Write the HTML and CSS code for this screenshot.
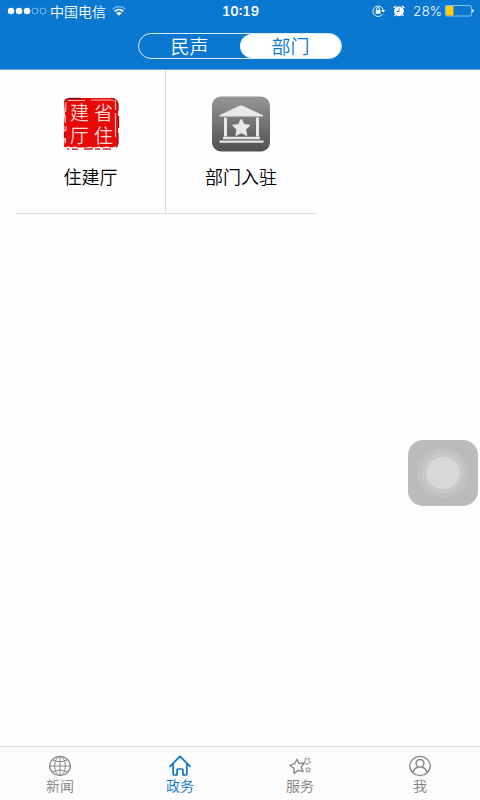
FILE: index.html
```html
<!DOCTYPE html>
<html lang="zh-CN">
<head>
<meta charset="utf-8">
<meta name="viewport" content="width=device-width, initial-scale=1">
<title>政务</title>
<link rel="stylesheet" href="styles.css">
</head>
<body>
<header class="header">
  <div class="status">
    <div class="status-side">
      <svg class="signal" width="40" height="8" viewBox="0 0 40 8" fill="#fff" aria-hidden="true">
        <circle cx="4" cy="4" r="3.2"/><circle cx="12" cy="4" r="3.2"/><circle cx="20" cy="4" r="3.2"/>
        <g fill="none" stroke="#b4d6f2" stroke-width=".7"><circle cx="28" cy="4" r="3"/><circle cx="36" cy="4" r="3"/></g>
      </svg>
      <span class="carrier">中国电信</span>
      <svg class="wifi" width="14" height="10" viewBox="0 0 14 10" fill="none" aria-hidden="true">
        <path d="M.7 3.2Q7-2 13.300 3.200" stroke="#78b5e6" stroke-width="1.300"/>
        <path d="M2.700 5.400Q7 1.700 11.300 5.400" stroke="#fff" stroke-width="1.500"/>
        <path d="M4.200 7Q7 4.800 9.800 7L7 9.800Z" fill="#fff"/>
      </svg>
    </div>
    <time class="clock">10:19</time>
    <div class="status-side status-right">
      <svg width="14" height="12" viewBox="0 0 14 12" fill="none" stroke="#fff" aria-hidden="true">
        <path d="M10.600 9A5.200 5.200 0 1 1 11.200 5" stroke-width=".9"/>
        <path d="M9.300 5h4l-2 2.500Z" fill="#fff" stroke="none"/>
        <path d="M4.600 5.300V4a1.500 1.500 0 0 1 3 0v1.300" stroke-width=".9"/>
        <rect x="3.700" y="5" width="4.800" height="3.700" fill="#fff" stroke="none"/>
      </svg>
      <svg class="alarm" width="12" height="12" viewBox="0 0 12 12" fill="none" aria-hidden="true">
        <circle cx="6" cy="6.300" r="4.900" fill="#fff"/>
        <path d="M.7 2.800 2.900 1M11.300 2.800 9.100 1M2.500 10 1.600 11M9.500 10l.9 1" stroke="#fff" stroke-width="1.300"/>
        <path d="M6 3.300v3.200H3.700" stroke="#0a78d0" stroke-width=".9"/>
      </svg>
      <span class="percent">28%</span>
      <svg width="29" height="12" viewBox="0 0 29 12" aria-hidden="true">
        <rect x=".5" y=".5" width="26" height="10.500" rx="1.500" fill="none" stroke="#a9d0f0" stroke-width=".8"/>
        <rect x="1" y="1" width="7.500" height="9.500" fill="#fecb05"/>
        <path d="M27.200 4q1.500.3 1.500 1.800t-1.500 1.800Z" fill="#fff"/>
      </svg>
    </div>
  </div>
  <div class="segments">
    <button class="segment" type="button">民声</button>
    <button class="segment segment-on" type="button" aria-pressed="true">部门</button>
  </div>
</header>

<main class="content">
  <div class="departments">
    <a class="department" href="#housing">
      <svg class="department-icon" width="58" height="56" viewBox="0 0 58 56" aria-hidden="true">
        <path d="M3 3 7 2h45l4 3v45l-2 2H3l-1-2 1-10-1-12 1-10-1-12Z" fill="#e80808"/>
        <path d="M5 4.500h18M29 4h24.500v10M53.500 17v24M3.800 6v10M3.300 19v8M4 30v5M3.500 42v5" fill="none" stroke="#f7b9b5" stroke-width="1.200"/>
        <path d="M3 6 7 2.500h12M49 2l5 2M56 7v8M56.500 20v12M56 37v11M2.500 36v6" fill="none" stroke="#8d1720" stroke-width="1.300"/>
        <path d="M0 51l3 .5 3-1 4 1 3-1 3 1h8l4-.8 4 .8 5-1 3 1 5-1 4 1 5-1v5H0Z" fill="#fefefe"/>
        <path d="M5 53h2M10 53.300h6M22 53h7l2-.7M33 53h5M41 53h8" stroke="#d42c32" stroke-width="1.500"/>
        <g class="seal-text"><text x="8" y="24">建</text><text x="32" y="24">省</text><text x="8" y="47">厅</text><text x="32" y="47">住</text></g>
      </svg>
      <span>住建厅</span>
    </a>
    <a class="department" href="#join">
      <svg class="department-icon" width="58" height="56" viewBox="0 0 58 56" aria-hidden="true">
        <defs><linearGradient id="metal" x2="0" y2="1"><stop stop-color="#969696"/><stop offset="1" stop-color="#505050"/></linearGradient></defs>
        <rect y=".5" width="58" height="55" rx="9" fill="url(#metal)"/>
        <g fill="#e8e8e8">
          <path d="M7.500 20.500v-1.200L26 10.200q3-1.500 6 0l19 9.100v1.200Z"/>
          <path d="M12 21.500h3v19h-3ZM44 21.500h3v19h-3Z"/>
          <path d="M11 40.800h37v2.400H11ZM7.500 44.500h44v2.300h-44Z"/>
          <path d="m29.300 23 2.700 5.500 6 .8-4.400 4.200 1.200 6-5.500-2.700-5.400 2.700 1.100-6-4.400-4.200 6-.8Z" stroke="#e8e8e8" stroke-linejoin="round"/>
        </g>
      </svg>
      <span>部门入驻</span>
    </a>
  </div>
</main>

<button class="assist" type="button" aria-label="辅助触控"><span class="assist-dot"></span></button>

<nav class="tabs">
  <a class="tab" href="#news">
    <svg width="24" height="22" viewBox="0 0 24 22" fill="none" stroke="#888" aria-hidden="true">
      <ellipse cx="12" cy="11" rx="10.300" ry="9.600" stroke-width="1.300"/>
      <ellipse cx="12" cy="11" rx="5.300" ry="9.600"/>
      <path d="M12 1.500v19M1.700 11h20.600M4.300 4.800Q12 8.800 19.700 4.800M4.300 17.200Q12 13.200 19.700 17.200"/>
    </svg>
    <span>新闻</span>
  </a>
  <a class="tab tab-on" href="#affairs" aria-current="page">
    <svg width="24" height="22" viewBox="0 0 24 22" fill="none" stroke="#0a75c9" stroke-width="1.700" stroke-linejoin="round" stroke-linecap="round" aria-hidden="true">
      <path d="M2 11.300 12 1.300l10 10M5.200 9v10.300q0 .7.800.7h3v-5q0-1 1-1h4q1 0 1 1v5h3q.8 0 .8-.7V9"/>
    </svg>
    <span>政务</span>
  </a>
  <a class="tab" href="#services">
    <svg width="24" height="22" viewBox="0 0 24 22" fill="none" stroke="#888" stroke-linejoin="round" aria-hidden="true">
      <path d="m9 4.300 2.200 4.200 5-.5-3 4 1.900 4.700-4.900-1.400-4.100 3.200-.1-5.200-4.200-3 5-1.600Z" stroke-width="1.400"/>
      <path d="m17.300 3 1.900 1.200 2.300-.9-.3 2.400 1.500 1.800-2.300.5-1.200 2-1.300-1.900-2.300-.1 1.400-1.900Z" stroke-width=".9"/>
      <path d="m20 12.300.9 1.400 1.600.2-1 1.300.4 1.600-1.600-.5-1.500.8v-1.700l-1.200-1.200 1.600-.4Z" stroke-width=".9"/>
    </svg>
    <span>服务</span>
  </a>
  <a class="tab" href="#me">
    <svg width="24" height="22" viewBox="0 0 24 22" fill="none" stroke="#888" aria-hidden="true">
      <ellipse cx="12" cy="11" rx="10.200" ry="9.600" stroke-width="1.300"/>
      <circle cx="12" cy="8.300" r="3.900" stroke-width="1.500"/>
      <path d="M5 18Q6 13 10.200 12M19 18Q18 13 13.800 12" stroke-width="1.400"/>
    </svg>
    <span>我</span>
  </a>
</nav>
</body>
</html>
```
FILE: styles.css
```css
* {
  box-sizing: border-box;
}

body {
  display: flex;
  flex-direction: column;
  min-height: 100vh;
  margin: 0;
  background: #fefefe;
  color: #000;
  font-family: "Noto Sans CJK SC", sans-serif;
  font-weight: 350;
}

svg {
  display: block;
  flex: none;
}

a {
  color: inherit;
  text-decoration: none;
}

button {
  padding: 0;
  border: 0;
  font: inherit;
}

.header {
  padding-bottom: 10px;
  border-bottom: 1px solid #6bade3;
  background: #0a78d0;
  color: #fff;
}

.status {
  display: grid;
  grid-template-columns: 1fr auto 1fr;
  align-items: center;
  height: 22px;
  padding: 0 6px 0 7px;
  margin-bottom: 11px;
}

.status-side {
  display: flex;
  align-items: center;
}

.status-right {
  justify-content: flex-end;
}

.carrier {
  margin: 0 6px 0 3px;
  font-size: 14px;
  line-height: 22px;
}

.clock,
.percent {
  font-family: Inter, sans-serif;
  font-size: 13px;
  font-variant-numeric: tabular-nums;
  line-height: 22px;
}

.clock {
  font-weight: 600;
}

.alarm {
  margin: 0 8px 0 7px;
}

.percent {
  margin-right: 3px;
}

.segments {
  display: flex;
  width: 204px;
  height: 26px;
  margin: 0 auto;
  border: 1px solid #dcecf9;
  border-radius: 13px;
}

.segment {
  flex: 1;
  border-radius: 12px;
  background: none;
  color: #fff;
  font-size: 19px;
  line-height: 24px;
}

.segment-on {
  background: #fff;
  color: #0a78d0;
}

.content {
  flex: 1;
  padding: 0 16px;
}

.departments {
  display: flex;
  flex-wrap: wrap;
}

.department {
  display: flex;
  flex-direction: column;
  align-items: center;
  gap: 10px;
  width: 150px;
  padding: 26px 0 23px;
  border-bottom: 1px solid #dcdcdc;
  font-size: 18px;
  line-height: 28px;
}

.department:first-child {
  border-right: 1px solid #dcdcdc;
}

.seal-text {
  fill: #fbd8d2;
  font-family: "Noto Sans CJK SC", sans-serif;
  font-size: 19px;
}

.assist {
  position: fixed;
  right: 2px;
  bottom: 294px;
  display: grid;
  place-items: center;
  width: 70px;
  height: 66px;
  border-radius: 15px;
  background: #bbb;
}

.assist-dot {
  width: 34px;
  height: 32px;
  border-radius: 50%;
  background: #d8d8d8;
  box-shadow: 0 0 0 4px #c8c8c8, 0 0 0 9px #c1c1c1;
}

.tabs {
  display: grid;
  grid-template-columns: repeat(4, 1fr);
  height: 54px;
  padding-top: 8px;
  border-top: 1px solid #dcdcdc;
  background: #fcfcfc;
}

.tab {
  display: flex;
  flex-direction: column;
  align-items: center;
  color: #808080;
  font-size: 14px;
  line-height: 16px;
}

.tab-on {
  color: #0a75c9;
}
```
